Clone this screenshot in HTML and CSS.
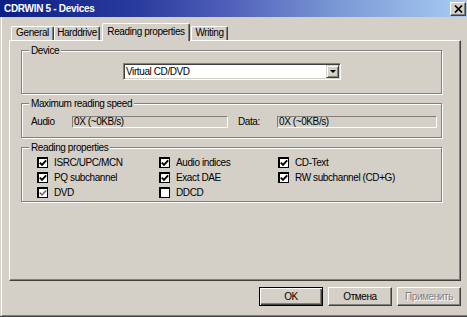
FILE: index.html
```html
<!DOCTYPE html>
<html>
<head>
<meta charset="utf-8">
<link rel="stylesheet" href="styles.css">
</head>
<body>
<div class="window">
  <div class="titlebar">
    <span class="title">CDRWIN 5 - Devices</span>
    <span class="close"><svg width="9" height="8" viewBox="0 0 9 8"><path d="M1 0.5 L8 7.5 M8 0.5 L1 7.5" stroke="#000" stroke-width="1.7" fill="none"/></svg></span>
  </div>
  <div class="client">
    <div class="tabs">
      <div class="tab tab-general">General</div>
      <div class="tab tab-hdd">Harddrive</div>
      <div class="tab tab-read active">Reading properties</div>
      <div class="tab tab-write">Writing</div>
    </div>
    <div class="panel">
      <div class="group group-device">
        <div class="legend">Device</div>
        <div class="combo">
          <span class="combo-text">Virtual CD/DVD</span>
          <span class="combo-btn"><span class="arrow"></span></span>
        </div>
      </div>
      <div class="group group-speed">
        <div class="legend">Maximum reading speed</div>
        <div class="speed-row">
          <span class="lbl lbl-audio">Audio</span>
          <span class="field field-audio">0X (~0KB/s)</span>
          <span class="lbl lbl-data">Data:</span>
          <span class="field field-data">0X (~0KB/s)</span>
        </div>
      </div>
      <div class="group group-read">
        <div class="legend">Reading properties</div>
        <div class="checks">
          <div class="check"><span class="box"><svg width="8" height="8" viewBox="0 0 8 8"><path d="M0.8 3.6 L3 5.9 L7.2 1.4" stroke="#000" stroke-width="1.9" fill="none"/></svg></span>ISRC/UPC/MCN</div>
          <div class="check"><span class="box"><svg width="8" height="8" viewBox="0 0 8 8"><path d="M0.8 3.6 L3 5.9 L7.2 1.4" stroke="#000" stroke-width="1.9" fill="none"/></svg></span>Audio indices</div>
          <div class="check"><span class="box"><svg width="8" height="8" viewBox="0 0 8 8"><path d="M0.8 3.6 L3 5.9 L7.2 1.4" stroke="#000" stroke-width="1.9" fill="none"/></svg></span>CD-Text</div>
          <div class="check"><span class="box"><svg width="8" height="8" viewBox="0 0 8 8"><path d="M0.8 3.6 L3 5.9 L7.2 1.4" stroke="#000" stroke-width="1.9" fill="none"/></svg></span>PQ subchannel</div>
          <div class="check"><span class="box"><svg width="8" height="8" viewBox="0 0 8 8"><path d="M0.8 3.6 L3 5.9 L7.2 1.4" stroke="#000" stroke-width="1.9" fill="none"/></svg></span>Exact DAE</div>
          <div class="check"><span class="box"><svg width="8" height="8" viewBox="0 0 8 8"><path d="M0.8 3.6 L3 5.9 L7.2 1.4" stroke="#000" stroke-width="1.9" fill="none"/></svg></span>RW subchannel (CD+G)</div>
          <div class="check"><span class="box"><svg width="8" height="8" viewBox="0 0 8 8"><path d="M0.8 3.6 L3 5.9 L7.2 1.4" stroke="#666" stroke-width="1.5" fill="none"/></svg></span>DVD</div>
          <div class="check"><span class="box"></span>DDCD</div>
        </div>
      </div>
    </div>
    <div class="buttons">
      <div class="btn default">OK</div>
      <div class="btn">Отмена</div>
      <div class="btn disabled">Применить</div>
    </div>
  </div>
</div>
</body>
</html>
```
FILE: styles.css
```css
* { box-sizing: border-box; }
html, body { margin: 0; padding: 0; }
body {
  width: 467px;
  height: 317px;
  overflow: hidden;
  background: #d4d0c8;
  font-family: "Liberation Sans", Arial, sans-serif;
  font-size: 10px;
  letter-spacing: -0.4px;
  color: #000;
}
.window {
  height: 317px;
  display: flex;
  flex-direction: column;
  border-bottom: 1px solid #404040;
}
.titlebar {
  height: 17px;
  flex: none;
  display: flex;
  align-items: center;
  justify-content: space-between;
  padding: 0 1px 0 4px;
  background: linear-gradient(to right, #0a1e86 0%, #2a3c9e 30%, #5262bb 50%, #7a98d4 72%, #a8ccf2 100%);
}
.title {
  color: #fff;
  font-weight: bold;
  font-size: 10px;
  letter-spacing: -0.3px;
}
.close {
  width: 16px;
  height: 14px;
  background: #d4d0c8;
  border: 1px solid;
  border-color: #fff #404040 #404040 #fff;
  box-shadow: inset -1px -1px #808080;
  display: flex;
  align-items: center;
  justify-content: center;
}
.client {
  flex: 1;
  margin-left: 1px;
  border-left: 1px solid #fff;
  border-bottom: 1px solid #808080;
  padding-top: 6px;
  display: flex;
  flex-direction: column;
}
.tabs {
  display: flex;
  align-items: flex-end;
  height: 17px;
  padding-left: 9px;
  position: relative;
  z-index: 1;
}
.tab {
  height: 14px;
  border-top: 1px solid #fff;
  border-left: 1px solid #fff;
  border-right: 1px solid #404040;
  box-shadow: inset -1px 0 #808080;
  border-top-left-radius: 2px;
  border-top-right-radius: 2px;
  text-align: center;
  line-height: 12px;
  background: #d4d0c8;
}
.tab-general { width: 43px; }
.tab-hdd { width: 46px; }
.tab-read { width: 88px; margin-left: 2px; }
.tab-write { width: 37px; margin-left: 1px; }
.tab.active {
  height: 18px;
  margin-bottom: -1px;
  line-height: 15px;
}
.panel {
  margin-left: 7px;
  width: 452px;
  height: 241px;
  flex: none;
  border: 1px solid;
  border-color: #fff #404040 #404040 #fff;
  box-shadow: inset -1px -1px #808080;
  padding-left: 11px;
}
.group {
  width: 421px;
  margin-top: 9px;
  border: 1px solid #808080;
  box-shadow: inset 1px 1px #fff, 1px 1px #fff;
}
.group-device { height: 44px; }
.group-speed { height: 35px; }
.group-read { height: 55px; }
.legend {
  display: block;
  width: fit-content;
  margin: -6px 0 0 7px;
  padding: 0 2px;
  line-height: 11px;
  background: #d4d0c8;
}
.combo {
  margin: 7px 0 0 101px;
  width: 218px;
  height: 17px;
  background: #fff;
  border: 1px solid;
  border-color: #808080 #fff #fff #808080;
  box-shadow: inset 1px 1px #404040, inset -1px -1px #d4d0c8;
  display: flex;
  align-items: center;
  padding: 1px 1px 1px 2px;
}
.combo-text { flex: 1; line-height: 13px; }
.combo-btn {
  width: 13px;
  height: 13px;
  background: #d4d0c8;
  border: 1px solid;
  border-color: #d4d0c8 #404040 #404040 #d4d0c8;
  box-shadow: inset 1px 1px #fff, inset -1px -1px #808080;
  display: flex;
  align-items: center;
  justify-content: center;
}
.arrow {
  width: 0;
  height: 0;
  border-left: 3px solid transparent;
  border-right: 3px solid transparent;
  border-top: 3px solid #000;
}
.speed-row {
  display: flex;
  align-items: center;
  margin-top: 7px;
  padding-left: 9px;
}
.lbl { line-height: 12px; }
.lbl-audio { width: 41px; }
.lbl-data { width: 39px; margin-left: 10px; }
.field {
  height: 12px;
  line-height: 10px;
  padding-left: 1px;
  border: 1px solid;
  border-color: #808080 #fff #fff #808080;
  background: #d4d0c8;
}
.field-audio { width: 156px; }
.field-data { width: 160px; }
.checks {
  display: grid;
  grid-template-columns: 122px 119px 1fr;
  margin-top: 2px;
  padding-left: 15px;
}
.check {
  display: flex;
  align-items: center;
  gap: 6px;
  height: 15px;
}
.box {
  width: 11px;
  height: 11px;
  flex: none;
  background: #fff;
  border: 2px solid #000;
  border-right-width: 1px;
  border-bottom-width: 1px;
  display: flex;
  align-items: center;
  justify-content: center;
}
.buttons {
  display: flex;
  justify-content: flex-end;
  gap: 5px;
  margin-top: 6px;
  padding-right: 6px;
}
.btn {
  width: 64px;
  height: 19px;
  text-align: center;
  line-height: 17px;
  border: 1px solid;
  border-color: #fff #404040 #404040 #fff;
  box-shadow: inset -1px -1px #808080;
}
.btn.default {
  border: 1px solid #000;
  box-shadow: inset 1px 1px #fff, inset -1px -1px #404040, inset -2px -2px #808080;
  line-height: 17px;
}
.btn.disabled {
  color: #808080;
  text-shadow: 1px 1px #fff;
}
```
